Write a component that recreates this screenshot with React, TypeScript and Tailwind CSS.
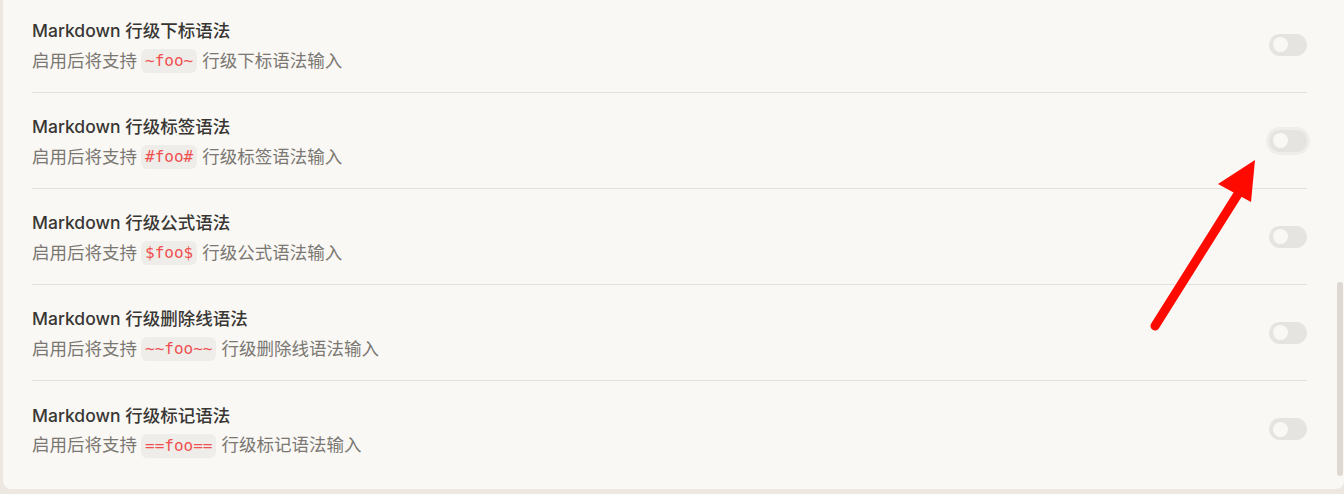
import React from "react";

type Setting = {
  title: string;
  code: string;
  suffix: string;
  focused?: boolean;
};

const settings: Setting[] = [
  { title: "Markdown 行级下标语法", code: "~foo~", suffix: "行级下标语法输入" },
  { title: "Markdown 行级标签语法", code: "#foo#", suffix: "行级标签语法输入", focused: true },
  { title: "Markdown 行级公式语法", code: "$foo$", suffix: "行级公式语法输入" },
  { title: "Markdown 行级删除线语法", code: "~~foo~~", suffix: "行级删除线语法输入" },
  { title: "Markdown 行级标记语法", code: "==foo==", suffix: "行级标记语法输入" },
];

const sans = { fontFamily: '"Inter", "Noto Sans CJK SC", sans-serif' };
const mono = { fontFamily: '"DejaVu Sans Mono", "Liberation Mono", monospace' };

function Toggle({ focused }: { focused?: boolean }) {
  return (
    <button
      type="button"
      className={`flex h-[22px] w-[38px] shrink-0 items-center rounded-full bg-[#e6e4e0] ${
        focused ? "ring-[3px] ring-[#efeeea]" : ""
      }`}
    >
      <span className="ml-[4px] h-[15px] w-[15px] rounded-full bg-[#f9f8f5]" />
    </button>
  );
}

function SettingRow({ item, last }: { item: Setting; last: boolean }) {
  return (
    <div className="flex h-[96px] items-center pl-[29px] pr-[37px]">
      <div
        className={`flex h-full flex-1 items-center justify-between ${
          last ? "" : "border-b border-[#e3dfda]"
        }`}
      >
        <div className="flex flex-col pt-[3px]">
          <p className="text-[17.5px] font-medium leading-[24px] text-[#393733]">{item.title}</p>
          <div className="mt-[6px] flex h-[24px] items-center text-[17.5px] text-[#7b7772]">
            <span>启用后将支持</span>
            <code
              className="ml-[4px] mr-[5px] flex h-[24px] items-center rounded-md bg-[#efedea] px-[4px] text-[16px] text-[#ee5050]"
              style={mono}
            >
              {item.code}
            </code>
            <span>{item.suffix}</span>
          </div>
        </div>
        <Toggle focused={item.focused} />
      </div>
    </div>
  );
}

export default function App() {
  return (
    <div
      className="relative h-[494px] w-[1344px] overflow-hidden bg-[#ece7e1] pb-[5px] pl-[3px]"
      style={sans}
    >
      <div className="relative h-full overflow-hidden rounded-b-lg bg-[#f9f8f5]">
        <div className="-mt-[3px] flex flex-col">
          {settings.map((item, i) => (
            <SettingRow key={item.title} item={item} last={i === settings.length - 1} />
          ))}
        </div>
        {/* scrollbar thumb */}
        <div className="absolute right-[1px] top-[282px] h-[194px] w-[6px] rounded-full bg-[#ddd8d2]" />
      </div>

      {/* annotation arrow */}
      <svg
        className="pointer-events-none absolute inset-0"
        width="1344"
        height="494"
        viewBox="0 0 1344 494"
      >
        <line
          x1="1155"
          y1="326"
          x2="1238"
          y2="194"
          stroke="#fe0a00"
          strokeWidth="9"
          strokeLinecap="round"
        />
        <polygon points="1255,160 1218,184 1251,202" fill="#fe0a00" />
      </svg>
    </div>
  );
}
